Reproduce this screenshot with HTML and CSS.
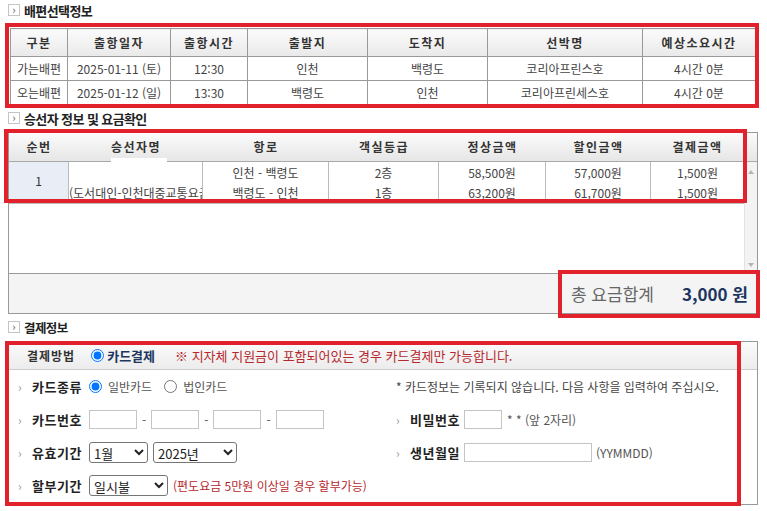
FILE: index.html
```html
<!DOCTYPE html>
<html lang="ko">
<head>
    <meta charset="UTF-8">
    <title>배편 예약 - 결제</title>
    <link rel="stylesheet" href="styles.css">
</head>
<body>
<div class="page">
    <h3 class="sec-title"><span class="ico">&rsaquo;</span>배편선택정보</h3>
    <table class="grid ship">
        <colgroup>
            <col style="width:57px"><col style="width:103px"><col style="width:77px"><col style="width:120px">
            <col style="width:120px"><col style="width:155px"><col style="width:113px">
        </colgroup>
        <thead>
            <tr><th>구분</th><th>출항일자</th><th>출항시간</th><th>출발지</th><th>도착지</th><th>선박명</th><th>예상소요시간</th></tr>
        </thead>
        <tbody>
            <tr><td>가는배편</td><td>2025-01-11 (토)</td><td>12:30</td><td>인천</td><td>백령도</td><td>코리아프린스호</td><td>4시간 0분</td></tr>
            <tr><td>오는배편</td><td>2025-01-12 (일)</td><td>13:30</td><td>백령도</td><td>인천</td><td>코리아프린세스호</td><td>4시간 0분</td></tr>
        </tbody>
    </table>

    <h3 class="sec-title"><span class="ico">&rsaquo;</span>승선자 정보 및 요금확인</h3>
    <div class="pass-box">
        <div class="pass-head">
            <span style="width:60px">순번</span>
            <span style="width:134px">승선자명</span>
            <span style="width:126px">항로</span>
            <span style="width:110px">객실등급</span>
            <span style="width:107px">정상금액</span>
            <span style="width:105px">할인금액</span>
            <span style="width:93px">결제금액</span>
            <i class="name-hide"></i>
        </div>
        <div class="pass-body">
            <div class="pass-rows">
                <div class="pass-row">
                    <div class="c no" style="width:60px">1</div>
                    <div class="c name" style="width:134px"><span></span><span>(도서대인-인천대중교통요금</span></div>
                    <div class="c" style="width:126px"><span>인천 - 백령도</span><span>백령도 - 인천</span></div>
                    <div class="c" style="width:110px"><span>2층</span><span>1층</span></div>
                    <div class="c" style="width:107px"><span>58,500원</span><span>63,200원</span></div>
                    <div class="c" style="width:105px"><span>57,000원</span><span>61,700원</span></div>
                    <div class="c" style="width:93px"><span>1,500원</span><span>1,500원</span></div>
                </div>
            </div>
            <div class="scroll">
                <span class="arr up"></span>
                <span class="arr down"></span>
            </div>
        </div>
        <div class="pass-foot">
            <span class="sum-label">총 요금합계</span>
            <span class="sum-val">3,000 원</span>
        </div>
    </div>

    <h3 class="sec-title small"><span class="ico">&rsaquo;</span>결제정보</h3>
    <div class="pay-box">
        <div class="pay-head">
            <b class="pay-label">결제방법</b>
            <label class="pay-method"><input type="radio" checked> 카드결제</label>
            <span class="warn">※ 지자체 지원금이 포함되어있는 경우 카드결제만 가능합니다.</span>
        </div>
        <div class="pay-grid">
            <div class="row">
                <span class="lbl">카드종류</span>
                <label class="opt"><input type="radio" name="kind" checked> 일반카드</label>
                <label class="opt"><input type="radio" name="kind"> 법인카드</label>
            </div>
            <div class="row note">* 카드정보는 기록되지 않습니다. 다음 사항을 입력하여 주십시오.</div>

            <div class="row">
                <span class="lbl">카드번호</span>
                <input type="text" class="num"> <span class="dash">-</span>
                <input type="text" class="num"> <span class="dash">-</span>
                <input type="text" class="num"> <span class="dash">-</span>
                <input type="text" class="num">
            </div>
            <div class="row">
                <span class="lbl">비밀번호</span>
                <input type="text" class="pw">
                <span class="hint">* * (앞 2자리)</span>
            </div>

            <div class="row">
                <span class="lbl">유효기간</span>
                <select class="sel-month"><option>1월</option></select>
                <select class="sel-year"><option>2025년</option></select>
            </div>
            <div class="row">
                <span class="lbl">생년월일</span>
                <input type="text" class="birth">
                <span class="hint">(YYMMDD)</span>
            </div>

            <div class="row">
                <span class="lbl">할부기간</span>
                <select class="sel-inst"><option>일시불</option></select>
                <span class="warn">(편도요금 5만원 이상일 경우 할부가능)</span>
            </div>
            <div class="row"></div>
        </div>
    </div>

    <!-- 빨간 표시 박스 -->
    <div class="mark" style="left:5px; top:23px; width:754px; height:85px"></div>
    <div class="mark" style="left:4px; top:129px; width:743px; height:74px"></div>
    <div class="mark" style="left:558px; top:270px; width:202px; height:48px"></div>
    <div class="mark" style="left:5px; top:341px; width:736px; height:165px"></div>
</div>
</body>
</html>
```

FILE: styles.css
```css
* {
    box-sizing: border-box;
}
body {
    margin: 0;
    background-color: #fff;
    font-family: "Noto Sans CJK KR", sans-serif;
    font-size: 12px;
    color: #444;
}
.page {
    position: relative;
    width: 767px;
    height: 511px;
    overflow: hidden;
}
.sec-title {
    margin: 0;
    height: 20px;
    display: flex;
    align-items: center;
    padding-left: 8px;
    font-size: 13px;
    font-weight: bold;
    color: #222;
    letter-spacing: -0.6px;
}
.sec-title.small {
    font-size: 12.5px;
    margin-top: 3px;
}
.sec-title .ico {
    width: 12px;
    height: 12px;
    border: 1px solid #c4c4c4;
    margin-right: 4px;
    font-size: 11px;
    line-height: 9px;
    text-align: center;
    color: #555;
    font-weight: normal;
    letter-spacing: 0;
}

/* 배편 테이블 */
table.grid {
    border-collapse: collapse;
    table-layout: fixed;
}
table.ship {
    margin: 8px 0 3px 10px;
    width: 745px;
}
.ship th {
    height: 28px;
    background: linear-gradient(#fbfbfb, #e9e9e9);
    border: 1px solid #999;
    font-weight: bold;
    color: #333;
    letter-spacing: 1.5px;
}
.ship td {
    height: 24px;
    border: 1px solid #999;
    text-align: center;
    color: #444;
}

/* 승선자 */
.pass-box {
    margin: 4px 0 0 8px;
    width: 750px;
    height: 182px;
    border: 1px solid #999;
}
.pass-head {
    position: relative;
    display: flex;
    height: 29px;
    background: linear-gradient(#fbfbfb, #e6e6e6);
    border-bottom: 1px solid #aaa;
}
.pass-head span {
    line-height: 28px;
    text-align: center;
    font-weight: bold;
    color: #333;
    letter-spacing: 1.5px;
}
.name-hide {
    position: absolute;
    left: 102px;
    bottom: -1px;
    width: 56px;
    height: 4px;
    background: #fff;
}
.pass-body {
    display: flex;
    height: 111px;
}
.pass-rows {
    width: 735px;
}
.pass-row {
    display: flex;
    height: 42px;
    border-bottom: 1px solid #bbb;
}
.pass-row .c {
    display: flex;
    flex-direction: column;
    align-items: center;
    padding-top: 1px;
    border-right: 1px solid #bbb;
    line-height: 20px;
    white-space: nowrap;
    overflow: hidden;
}
.pass-row .c span {
    height: 20px;
}
.pass-row .c:last-child {
    border-right: none;
}
.pass-row .no {
    justify-content: center;
    padding-bottom: 4px;
    background: #e9eef6;
    color: #333;
}
.pass-row .name {
    align-items: flex-start;
}
.scroll {
    position: relative;
    flex: 1;
    background: #f3f3f3;
    border-left: 1px solid #e2e2e2;
}
.arr {
    position: absolute;
    left: 3px;
    width: 0;
    height: 0;
    border-left: 3px solid transparent;
    border-right: 3px solid transparent;
}
.arr.up {
    top: 8px;
    border-bottom: 4px solid #b5b5b5;
}
.arr.down {
    bottom: 6px;
    border-top: 4px solid #b5b5b5;
}
.pass-foot {
    height: 40px;
    border-top: 1px solid #999;
    background: #f4f4f4;
    display: flex;
    justify-content: flex-end;
    align-items: center;
    padding-right: 9px;
    font-size: 17px;
}
.sum-label {
    color: #666;
    margin-right: 28px;
}
.sum-val {
    color: #1c3561;
    font-weight: bold;
}

/* 결제정보 */
.pay-box {
    margin: 4px 0 0 8px;
    width: 750px;
    height: 164px;
    border: 1px solid #999;
}
.pay-head {
    display: flex;
    align-items: center;
    height: 28px;
    padding-left: 18px;
    background: linear-gradient(#fbfbfb, #ececec);
    border-bottom: 1px solid #ccc;
}
.pay-label {
    color: #333;
    letter-spacing: 1px;
    margin-right: 16px;
}
.pay-method {
    display: flex;
    align-items: center;
    font-weight: bold;
    color: #1c3561;
    font-size: 13px;
    margin-right: 20px;
}
.warn {
    color: #b5292e;
}
.pay-head .warn {
    font-size: 13px;
}
input[type="radio"] {
    margin: 0 3px 0 0;
    width: 13px;
    height: 13px;
}
.pay-grid {
    display: grid;
    grid-template-columns: 387px 1fr;
    grid-auto-rows: 33px;
}
.row {
    display: flex;
    align-items: center;
    padding-left: 9px;
}
.row:nth-child(even) {
    padding-left: 0;
}
.row .lbl {
    width: 71px;
    font-size: 13px;
    font-weight: bold;
    color: #222;
    letter-spacing: 0.5px;
}
.row .lbl::before {
    content: "\203A";
    display: inline-block;
    width: 14px;
    color: #999;
    font-weight: normal;
    font-size: 12px;
}
.row:nth-child(even) .lbl {
    width: 68px;
}
.row.note {
    color: #444;
}
.opt {
    display: flex;
    align-items: center;
    margin-right: 12px;
    color: #555;
}
.opt input {
    margin-right: 6px;
}
input[type="text"] {
    height: 19px;
    border: 1px solid #c4c4c4;
    padding: 0 2px;
}
.num {
    width: 48px;
}
.dash {
    margin: 0 5px;
    color: #555;
}
.pw {
    width: 38px;
    margin-right: 5px;
}
.birth {
    width: 128px;
    margin-right: 4px;
}
.hint {
    color: #555;
    font-size: 12px;
}
select {
    height: 21px;
    font-family: "Noto Sans CJK KR", sans-serif;
    font-size: 13px;
    color: #222;
    border: 1px solid #767676;
    border-radius: 3px;
    background: #fff;
    margin-right: 5px;
}
.sel-month {
    width: 59px;
}
.sel-year {
    width: 84px;
}
.sel-inst {
    width: 79px;
}

.mark {
    position: absolute;
    border: 4px solid #e1212b;
}
```
